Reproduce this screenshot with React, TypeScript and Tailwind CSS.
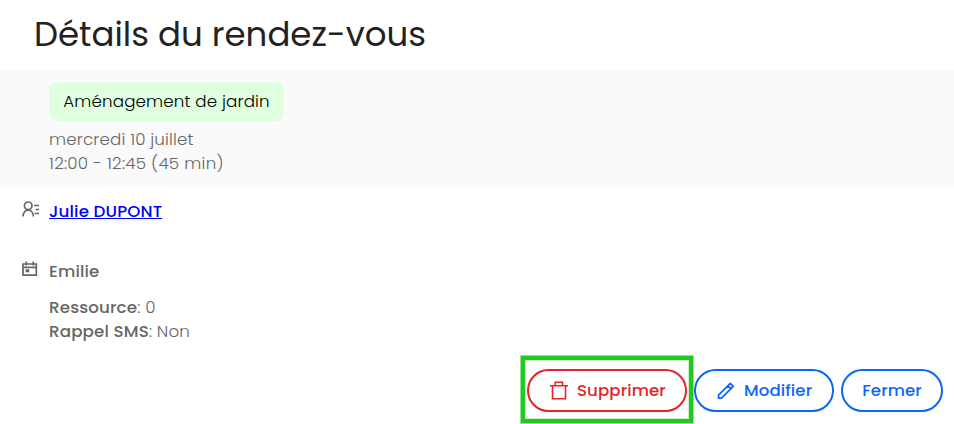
import type { ReactNode } from "react";

const ContactIcon = () => (
  <svg width="18" height="16" viewBox="0 0 18 16" fill="none" stroke="#666" strokeWidth="1.7">
    <circle cx="6.2" cy="4.8" r="3.8" />
    <path d="M1 15.6c0-3.800 2.200-6.400 5.200-6.400s5.200 2.600 5.200 6.400M12.100 4.500h4.900M13.600 8.500h3.400M12.600 12.500h4.400" />
  </svg>
);

const CalendarIcon = () => (
  <svg width="16" height="16" viewBox="0 0 16 16" fill="none" stroke="#666" strokeWidth="1.700">
    <path d="M1 3h13.300v11.200H1zM1 6.400h13.300M4.200 .4v4M11.200 .4v4" />
    <path d="M3.600 8.300h3.600v3H3.600z" fill="#666" stroke="none" />
  </svg>
);

const TrashIcon = () => (
  <svg width="18" height="19" viewBox="0 0 18 19" fill="none" stroke="currentColor" strokeWidth="1.600">
    <path d="M0 4.800h18M2.500 4.800v12.900h13V4.800M5.300 4.800V1.300h7.200v3.500" />
  </svg>
);

const PencilIcon = () => (
  <svg width="18" height="18" viewBox="0 0 18 18" fill="none" stroke="currentColor" strokeWidth="1.800" strokeLinejoin="round">
    <path d="M1.500 13.200L13.300 1.400l2.900 2.900L4.400 16.100H1.500zM10.900 3.800l2.900 2.900" />
  </svg>
);

interface DetailRowProps {
  icon?: ReactNode;
  children: ReactNode;
}

const DetailRow = ({ icon, children }: DetailRowProps) => (
  <div className="flex h-6 items-start leading-6 whitespace-nowrap">
    <span className="w-[27px] shrink-0 pt-0.5">{icon}</span>
    {children}
  </div>
);

export default function App() {
  return (
    <div className="h-[424px] w-full overflow-hidden bg-white font-['Poppins','Inter',sans-serif] text-[16.7px] font-light tracking-[0.15px] text-[#666]">
      <h1 className="h-[70px] pl-[34px] text-[34px] leading-[69px] font-normal tracking-normal whitespace-nowrap text-[#222]">
        Détails du rendez-vous
      </h1>

      <div className="h-[117px] bg-[#fafafa] pt-3 pl-[49px] leading-[25px]">
        <div className="mb-1.5 flex h-[39px] w-[235px] items-center justify-center rounded-lg bg-[#dfffdf] whitespace-nowrap text-black">
          Aménagement de jardin
        </div>
        <p className="h-6">mercredi 10 juillet</p>
        <p className="h-6 tracking-[0.26px]">12:00 - 12:45 (45 min)</p>
      </div>

      <div className="pt-3 pl-[22px]">
        <DetailRow icon={<ContactIcon />}>
          <a href="#" className="font-medium text-[#0000ff] underline">
            Julie DUPONT
          </a>
        </DetailRow>
        <div className="mt-9">
          <DetailRow icon={<CalendarIcon />}>
            <span className="font-medium">Emilie</span>
          </DetailRow>
        </div>
        <div className="mt-3">
          <DetailRow>
            <b className="font-medium">Ressource</b>: 0
          </DetailRow>
          <DetailRow>
            <b className="font-medium">Rappel SMS</b>
            <span>: Non</span>
          </DetailRow>
        </div>
      </div>

      {/* Actions */}
      <div className="mt-3 flex items-start justify-end pr-[11px] text-[16.6px] leading-6 font-medium tracking-[0.1px]">
        <div className="h-[69px] w-[174px] border border-[#90e490]">
          <div className="h-[67px] border-4 border-[#22c922] px-0.5 pt-[9px] shadow-[inset_0_0_0_1px_#c8f1c8]">
            <button className="flex h-[43px] w-[160px] items-center rounded-full border-2 border-[#e42326] pl-[21px] text-[#e42326]">
              <TrashIcon />
              <span className="ml-[9px] pt-px">Supprimer</span>
            </button>
          </div>
        </div>
        <button className="mt-3.5 flex h-[43px] w-[140px] items-center rounded-full border-2 border-[#0969f6] pl-[21px] text-[#0969f6]">
          <PencilIcon />
          <span className="ml-[9px] pt-px">Modifier</span>
        </button>
        <button className="mt-3.5 ml-[7px] h-[43px] w-[102px] rounded-full border-2 border-[#0969f6] pt-px text-[#0969f6]">
          Fermer
        </button>
      </div>
    </div>
  );
}
